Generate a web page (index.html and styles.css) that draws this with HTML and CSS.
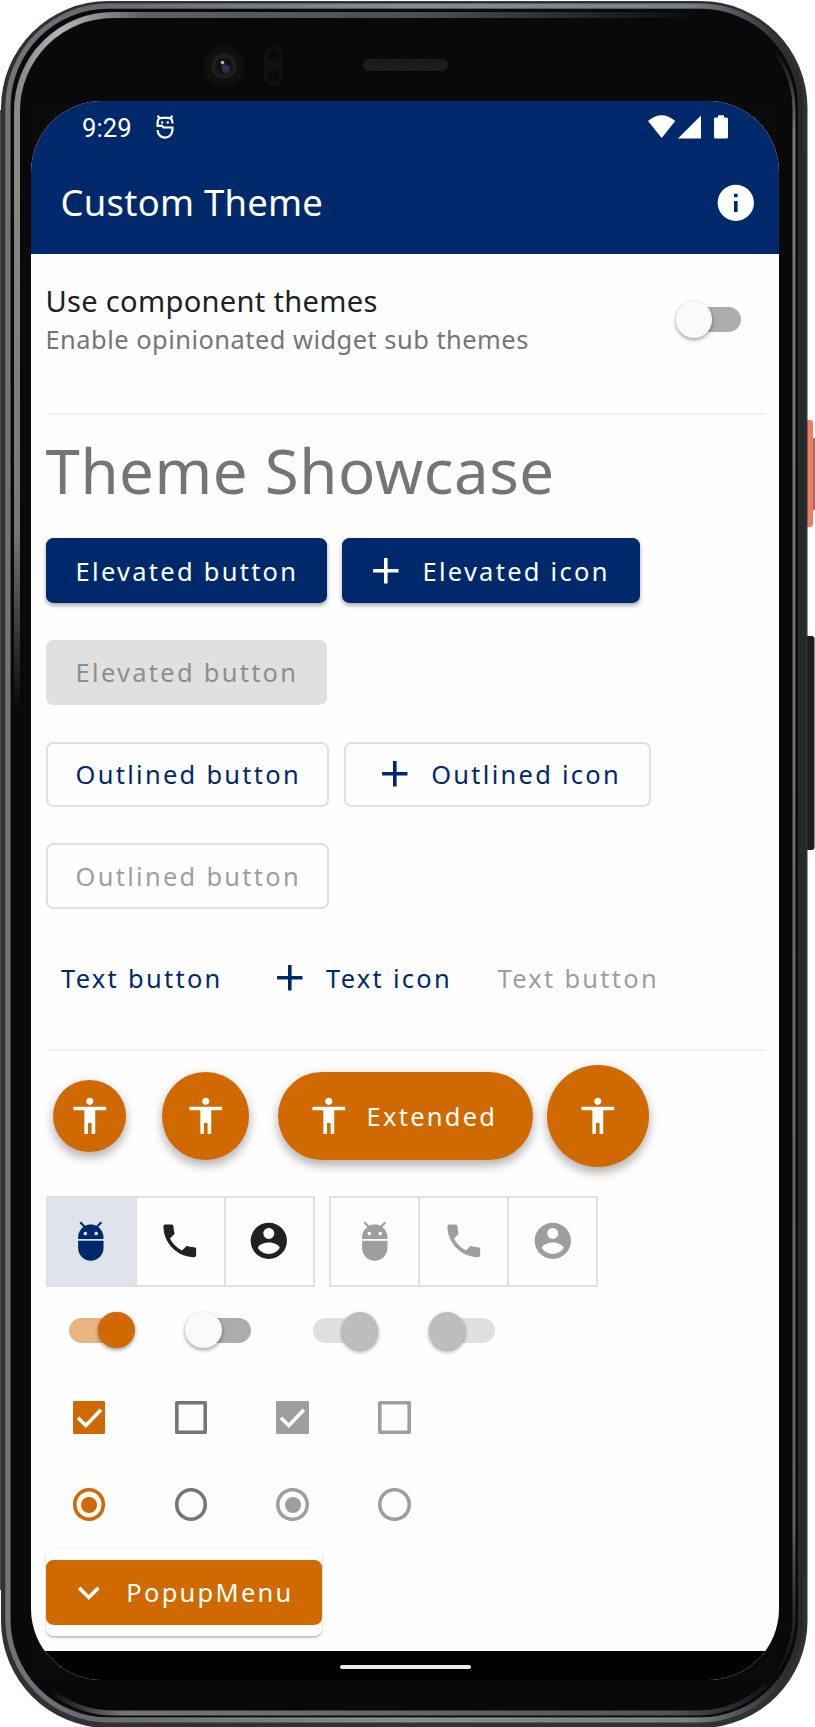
FILE: index.html
```html
<!DOCTYPE html>
<html lang="en">
<head>
<meta charset="utf-8">
<title>Custom Theme</title>
<link rel="stylesheet" href="styles.css">
</head>
<body>
<svg class="defs" width="0" height="0" aria-hidden="true">
  <symbol id="add" viewBox="0 0 24 24"><path d="M19 13h-6v6h-2v-6H5v-2h6V5h2v6h6v2z"/></symbol>
  <symbol id="person" viewBox="0 0 24 24"><path d="M12 2c1.1 0 2 .9 2 2s-.9 2-2 2-2-.9-2-2 .9-2 2-2zm9 7h-6v13h-2v-6h-2v6H9V9H3V7h18v2z"/></symbol>
  <symbol id="adb" viewBox="0 0 24 24"><path d="M5 16c0 3.87 3.13 7 7 7s7-3.13 7-7v-4H5v4zM16.12 4.37l2.1-2.1-.82-.83-2.3 2.31C14.16 3.28 13.12 3 12 3s-2.16.28-3.09.75L6.6 1.44l-.82.83 2.1 2.1C6.14 5.64 5 7.68 5 10v1h14v-1c0-2.32-1.14-4.36-2.88-5.63zM9 9c-.55 0-1-.45-1-1s.45-1 1-1 1 .45 1 1-.45 1-1 1zm6 0c-.55 0-1-.45-1-1s.45-1 1-1 1 .45 1 1-.45 1-1 1z"/></symbol>
  <symbol id="call" viewBox="0 0 24 24"><path d="M6.62 10.79c1.44 2.83 3.76 5.14 6.59 6.59l2.2-2.2c.27-.27.67-.36 1.02-.24 1.12.37 2.33.57 3.57.57.55 0 1 .45 1 1V20c0 .55-.45 1-1 1-9.39 0-17-7.61-17-17 0-.55.45-1 1-1h3.500c.55 0 1 .45 1 1 0 1.250.2 2.450.57 3.570.11.35.03.74-.25 1.020l-2.200 2.200z"/></symbol>
  <symbol id="account" viewBox="0 0 24 24"><path d="M12 2C6.48 2 2 6.48 2 12s4.48 10 10 10 10-4.48 10-10S17.52 2 12 2zm0 3c1.66 0 3 1.34 3 3s-1.34 3-3 3-3-1.34-3-3 1.34-3 3-3zm0 14.2c-2.5 0-4.71-1.28-6-3.22.03-1.99 4-3.08 6-3.08 1.99 0 5.97 1.09 6 3.08-1.29 1.94-3.5 3.22-6 3.22z"/></symbol>
  <symbol id="info" viewBox="0 0 24 24"><path d="M12 2C6.48 2 2 6.48 2 12s4.48 10 10 10 10-4.48 10-10S17.52 2 12 2zm1 15h-2v-6h2v6zm0-8h-2V7h2v2z"/></symbol>
  <symbol id="expand" viewBox="0 0 24 24"><path d="M16.59 8.59L12 13.17 7.41 8.59 6 10l6 6 6-6z"/></symbol>
  <symbol id="tick" viewBox="0 0 18 18"><path d="M2.700 9.200l4.400 4.300 8.300-8.700" fill="none" stroke="#fff" stroke-width="2"/></symbol>
</svg>

<div class="phone">
  <svg class="frame" viewBox="0 0 815 1727" aria-hidden="true">
    <defs>
      <linearGradient id="rim" x1="0" y1="0" x2="1" y2="0"><stop offset="0" stop-color="#74757a"/><stop offset=".1" stop-color="#666a70"/><stop offset=".5" stop-color="#868c92"/><stop offset=".86" stop-color="#7a8086"/><stop offset=".97" stop-color="#303234"/><stop offset="1" stop-color="#26282a"/></linearGradient>
      <linearGradient id="topInner" gradientUnits="userSpaceOnUse" x1="20" y1="0" x2="700" y2="0"><stop offset="0" stop-color="#8a8a8a"/><stop offset=".06" stop-color="#b5b5b5"/><stop offset=".18" stop-color="#606060"/><stop offset=".6" stop-color="#4e4e4e"/><stop offset="1" stop-color="#4e4e4e" stop-opacity="0"/></linearGradient>
      <linearGradient id="leftInner" gradientUnits="userSpaceOnUse" x1="0" y1="110" x2="0" y2="710"><stop offset="0" stop-color="#8a8a8a"/><stop offset=".7" stop-color="#777"/><stop offset="1" stop-color="#777" stop-opacity="0"/></linearGradient>
      <linearGradient id="rightInner" gradientUnits="userSpaceOnUse" x1="0" y1="50" x2="0" y2="1690"><stop offset="0" stop-color="#777" stop-opacity="0"/><stop offset=".05" stop-color="#777"/><stop offset=".9" stop-color="#606060"/><stop offset="1" stop-color="#444" stop-opacity="0"/></linearGradient>
      <linearGradient id="bottomInner" gradientUnits="userSpaceOnUse" x1="50" y1="0" x2="780" y2="0"><stop offset="0" stop-color="#777" stop-opacity="0"/><stop offset=".1" stop-color="#777"/><stop offset=".85" stop-color="#555"/><stop offset="1" stop-color="#555" stop-opacity="0"/></linearGradient>
      <pattern id="mesh" width="3" height="3" patternUnits="userSpaceOnUse"><rect width="3" height="3" fill="#262626"/><rect width="1.500" height="1.500" fill="#111"/><rect x="1.500" y="1.500" width="1.500" height="1.500" fill="#111"/></pattern>
      <radialGradient id="lens"><stop offset="0" stop-color="#25283a"/><stop offset=".4" stop-color="#0b0c12"/><stop offset=".75" stop-color="#1c1c1d"/><stop offset="1" stop-color="#222"/></radialGradient>
    </defs>
    <rect x="805" y="420" width="8" height="107" rx="3" fill="#ea7f66"/>
    <rect x="813" y="438" width="2" height="72" fill="#a2695e"/>
    <rect x="804" y="636" width="10.500" height="214" rx="3" fill="#1c1c1c"/>
    <rect x="1" y="1" width="806.500" height="1727" rx="107" fill="#303132"/>
    <path d="M.5 110V1590" stroke="#4a4c4c"/>
    <rect x="7.800" y="6" width="793" height="1714" rx="101" fill="none" stroke="url(#rim)" stroke-width="5"/>
    <rect x="11" y="9" width="787" height="1708" rx="97" fill="#09090b"/>
    <path d="M17 111A96 96 0 0 1 113 15H700" fill="none" stroke="url(#topInner)" stroke-width="6"/>
    <path d="M17 110V710" fill="none" stroke="url(#leftInner)" stroke-width="6"/>
    <path d="M766 41A96 96 0 0 1 794 109V1617A96 96 0 0 1 766 1685" fill="none" stroke="url(#rightInner)" stroke-width="3"/>
    <path d="M803 150V1580" stroke="#24292b" stroke-width="5"/>
    <path d="M45 1685A96 96 0 0 0 113 1713H698A96 96 0 0 0 766 1685" fill="none" stroke="url(#bottomInner)" stroke-width="5"/>
    <rect x="31" y="101" width="748" height="1579" fill="#0b0a08"/>
    <circle cx="224" cy="66" r="20.500" fill="#101010"/>
    <circle cx="224" cy="66" r="12.500" fill="url(#lens)"/>
    <circle cx="222.500" cy="62.500" r="1.800" fill="#b5b5b5"/>
    <circle cx="226" cy="69" r="4" fill="#343d66" opacity=".7"/>
    <rect x="264" y="46" width="19" height="40" rx="9.500" fill="#111"/>
    <circle cx="273.500" cy="55" r="6" fill="#0a0a0a"/><circle cx="273.500" cy="76" r="6" fill="#0a0a0a"/>
    <rect x="363" y="59" width="85" height="12" rx="6" fill="url(#mesh)"/>
  </svg>

  <main class="screen">
    <header class="top">
      <div class="status">
        <span class="clock">9:29</span>
        <svg class="bug" viewBox="0 0 18 24"><g fill="none" stroke="#fff" stroke-width="2.200"><path d="M1.600 10V7.500Q1.600 2.800 6 2.800H12Q16.400 2.800 16.400 7.500V8.500M.5 10.800H6L7.500 12.500H16.400V15A7.400 7.300 0 0 1 1.600 15.500V15"/><path d="M1.500 .8L4 3.600M16.500 .8L14 3.600"/></g><circle cx="6.200" cy="7.500" r="1.200" fill="#fff"/><circle cx="11.800" cy="7.500" r="1.200" fill="#fff"/></svg>
        <svg class="signals" viewBox="0 0 80 24" fill="#fff"><path d="M0 6Q13.500-5.500 27.300 6L13.700 23zM30 23.500L53 .5V23.500zM66.500 2.500H70V.3H76V2.500H78.500Q80 2.500 80 4V22Q80 23.500 78.500 23.500H67.500Q66 23.500 66 22V4Q66 2.500 66.500 2.500z"/></svg>
      </div>
      <div class="appbar">
        <h1 class="title">Custom Theme</h1>
        <svg class="icon"><use href="#info"/></svg>
      </div>
    </header>

    <div class="content">
      <section class="tile">
        <div>
          <p class="tile-title">Use component themes</p>
          <p class="tile-sub">Enable opinionated widget sub themes</p>
        </div>
        <div class="switch tile-switch"><i class="thumb"></i></div>
      </section>
      <hr class="rule">
      <h2 class="heading">Theme Showcase</h2>

      <section class="buttons">
        <div class="row">
          <button class="btn filled w-elevated">Elevated button</button>
          <button class="btn filled with-icon w-elevated-icon"><svg class="icon"><use href="#add"/></svg>Elevated icon</button>
        </div>
        <div class="row"><button class="btn filled off w-elevated">Elevated button</button></div>
        <div class="row">
          <button class="btn outlined w-outlined">Outlined button</button>
          <button class="btn outlined w-outlined-icon"><svg class="icon"><use href="#add"/></svg>Outlined icon</button>
        </div>
        <div class="row"><button class="btn outlined off w-outlined">Outlined button</button></div>
        <div class="row">
          <button class="btn text w-text">Text button</button>
          <button class="btn text w-text-icon"><svg class="icon"><use href="#add"/></svg>Text icon</button>
          <button class="btn text off">Text button</button>
        </div>
      </section>
      <hr class="rule">

      <section class="fabs">
        <button class="fab small"><svg class="icon"><use href="#person"/></svg></button>
        <button class="fab"><svg class="icon"><use href="#person"/></svg></button>
        <button class="fab extended"><svg class="icon"><use href="#person"/></svg>Extended</button>
        <button class="fab large"><svg class="icon"><use href="#person"/></svg></button>
      </section>

      <section class="toggles">
        <div class="group">
          <span class="cell selected"><svg class="icon"><use href="#adb"/></svg></span>
          <span class="cell"><svg class="icon"><use href="#call"/></svg></span>
          <span class="cell"><svg class="icon"><use href="#account"/></svg></span>
        </div>
        <div class="group off">
          <span class="cell"><svg class="icon"><use href="#adb"/></svg></span>
          <span class="cell"><svg class="icon"><use href="#call"/></svg></span>
          <span class="cell"><svg class="icon"><use href="#account"/></svg></span>
        </div>
      </section>

      <section class="switches">
        <div class="switch on"><i class="thumb"></i></div>
        <div class="switch"><i class="thumb"></i></div>
        <div class="switch on off"><i class="thumb"></i></div>
        <div class="switch off"><i class="thumb"></i></div>
      </section>

      <section class="choices">
        <span class="check on"><svg><use href="#tick"/></svg></span>
        <span class="check"></span>
        <span class="check on off"><svg><use href="#tick"/></svg></span>
        <span class="check off"></span>
        <span class="radio on"></span>
        <span class="radio"></span>
        <span class="radio on off"></span>
        <span class="radio off"></span>
      </section>

      <div class="popup"><div class="popup-button"><svg class="icon"><use href="#expand"/></svg>PopupMenu</div></div>
    </div>
    <footer class="navbar"><i class="pill"></i></footer>
  </main>
</div>
</body>
</html>
```
FILE: styles.css
```css
* { box-sizing: border-box; }
body { margin: 0; background: #fff; font-family: "Noto Sans", sans-serif; color: #212121; }
h1, h2, p { margin: 0; font-weight: 400; }
button { border: 0; background: none; font-family: inherit; }
.defs { position: absolute; }

.phone { position: relative; width: 815px; height: 1727px; padding: 101px 36px 47px 31px; overflow: hidden; }
.frame { position: absolute; inset: 0; width: 815px; height: 1727px; }
.screen { position: relative; display: flex; flex-direction: column; height: 1579px; border-radius: 71px; overflow: hidden; background: #fefefe; }
.icon { width: 43.6px; height: 43.6px; flex: none; fill: currentColor; display: block; }

.top { height: 153px; background: #00296b; color: #fff; flex: none; }
.status { display: flex; align-items: center; height: 52px; padding: 0 51px 0 51px; }
.clock { font: 400 25.6px/30px Roboto, sans-serif; width: 74px; letter-spacing: .1px; padding-top: 2px; }
.bug { width: 18px; height: 24px; }
.signals { width: 80px; height: 24px; margin-left: auto; }
.appbar { display: flex; align-items: center; justify-content: space-between; height: 100px; padding: 0 21.5px 0 29.5px; }
.title { font-size: 36.4px; line-height: 50px; letter-spacing: .27px; padding-bottom: 2px; }

.content { flex: 1; padding: 0 14.5px; }
.tile { display: flex; align-items: center; justify-content: space-between; height: 132px; }
.tile-title { font-size: 29.1px; line-height: 37.8px; letter-spacing: .29px; padding-top: 2px; }
.tile-sub { font-size: 25.45px; line-height: 37.8px; letter-spacing: .48px; color: #757575; }
.tile-switch { margin: 0 23.5px 1px 0; }
.rule { height: 2px; margin: 0; border: 0; background: #f2f2f2; }
.tile + .rule { margin-top: 27px; }
.heading { height: 80px; margin: 15px 0 28px; font-size: 61.8px; line-height: 80px; letter-spacing: .53px; color: #757575; }

.buttons { display: flex; flex-direction: column; gap: 36.4px; }
.row { display: flex; gap: 14.5px; }
.btn { display: flex; align-items: center; gap: 14.8px; height: 65.4px; padding: 0 0 0 30.1px; border-radius: 7.3px; font-size: 25.45px; letter-spacing: 2.29px; white-space: nowrap; color: #00296b; }
.filled { background: #00296b; color: #fff; box-shadow: 0 3px 4px rgba(0,0,0,.26), 0 1px 4px rgba(0,0,0,.1); }
.filled.off { background: #e0e0e0; color: #8e8e8e; box-shadow: none; }
.with-icon { padding-left: 22.5px; }
.outlined { border: 2px solid #e0e0e0; padding-left: 28.1px; }
.outlined.w-outlined-icon { padding-left: 27.3px; }
.text { padding: 0 0 0 15.6px; }
.off.outlined, .off.text { color: #9e9e9e; }
.w-elevated { width: 281.6px; }
.w-elevated-icon { width: 298.3px; }
.w-outlined { width: 283.5px; }
.w-outlined-icon { width: 307px; }
.w-text { width: 192.6px; }
.w-text-icon { width: 214.8px; padding-left: 15px; }
.buttons + .rule { margin-top: 38.1px; }

.fabs { display: flex; align-items: center; height: 102px; margin-top: 14.3px; padding-left: 7.5px; }
.fab { display: flex; align-items: center; justify-content: center; width: 87.3px; height: 87.3px; margin-right: 29px; padding: 0; border-radius: 51px; background: #d06900; color: #fff; font-size: 25.45px; letter-spacing: 2.27px; box-shadow: 0 6px 10px rgba(0,0,0,.22), 0 3px 14px rgba(0,0,0,.12); }
.small { width: 72.7px; height: 72.7px; margin-right: 36.4px; }
.extended { width: 254.6px; justify-content: flex-start; padding-left: 29.1px; gap: 15.5px; margin-right: 14.3px; }
.large { width: 101.8px; height: 101.8px; margin: 0; }

.toggles { display: flex; gap: 14.3px; margin-top: 28.7px; }
.group { display: flex; width: 269px; height: 91px; border: 2px solid #e0e0e0; }
.cell { flex: 1; display: flex; align-items: center; justify-content: center; }
.cell + .cell { border-left: 2px solid #e0e0e0; }
.selected { background: #dfe3ec; color: #00296b; }
.group.off { color: #9e9e9e; }

.switches { display: flex; gap: 61.8px; margin: 31px 0 0 23.7px; }
.switch { display: flex; align-items: center; width: 60px; height: 25.4px; border-radius: 13px; background: #acacac; }
.thumb { flex: none; width: 36.4px; height: 36.4px; margin-left: -5.5px; border-radius: 50%; background: #fafafa; box-shadow: 0 2px 4px rgba(0,0,0,.32), 0 1px 3px rgba(0,0,0,.1); }
.switch.on { background: #e8b480; }
.switch.on .thumb { margin-left: 29.1px; background: #d06900; }
.switch.off { background: #e0e0e0; }
.switch.off .thumb { background: #bdbdbd; height: 37.6px; margin-top: 1px; }

.choices { display: grid; grid-template-columns: repeat(4, 32.7px); gap: 54.5px 69.1px; margin: 58.2px 0 0 27.3px; }
.check, .radio { height: 32.7px; box-shadow: inset 0 0 0 3.6px currentColor; border-radius: 1.8px; color: #757575; }
.check svg { display: block; width: 32.7px; height: 32.7px; }
.check.on, .radio.on { color: #d06900; }
.check.on { background: currentColor; }
.check.off, .radio.off { color: #9e9e9e; }
.radio { border-radius: 50%; display: grid; place-items: center; }
.radio.on::before { content: ""; width: 16.4px; height: 16.4px; border-radius: 50%; background: currentColor; }

.popup { display: flex; align-items: center; width: 276.5px; height: 87px; margin-top: 27.8px; border-radius: 7.3px; background: #fff; box-shadow: 0 1.5px 2px rgba(0,0,0,.22), 0 0 2px rgba(0,0,0,.08); }
.popup-button { display: flex; align-items: center; gap: 15.3px; width: 100%; height: 65.4px; padding-left: 21.9px; border-radius: 7.3px; background: #d06900; color: #fff; font-size: 25.45px; letter-spacing: 2.29px; }

.navbar { flex: none; display: flex; justify-content: center; height: 29px; padding-top: 14px; background: #000; }
.pill { width: 131px; height: 4px; border-radius: 2px; background: #ececec; }
```
